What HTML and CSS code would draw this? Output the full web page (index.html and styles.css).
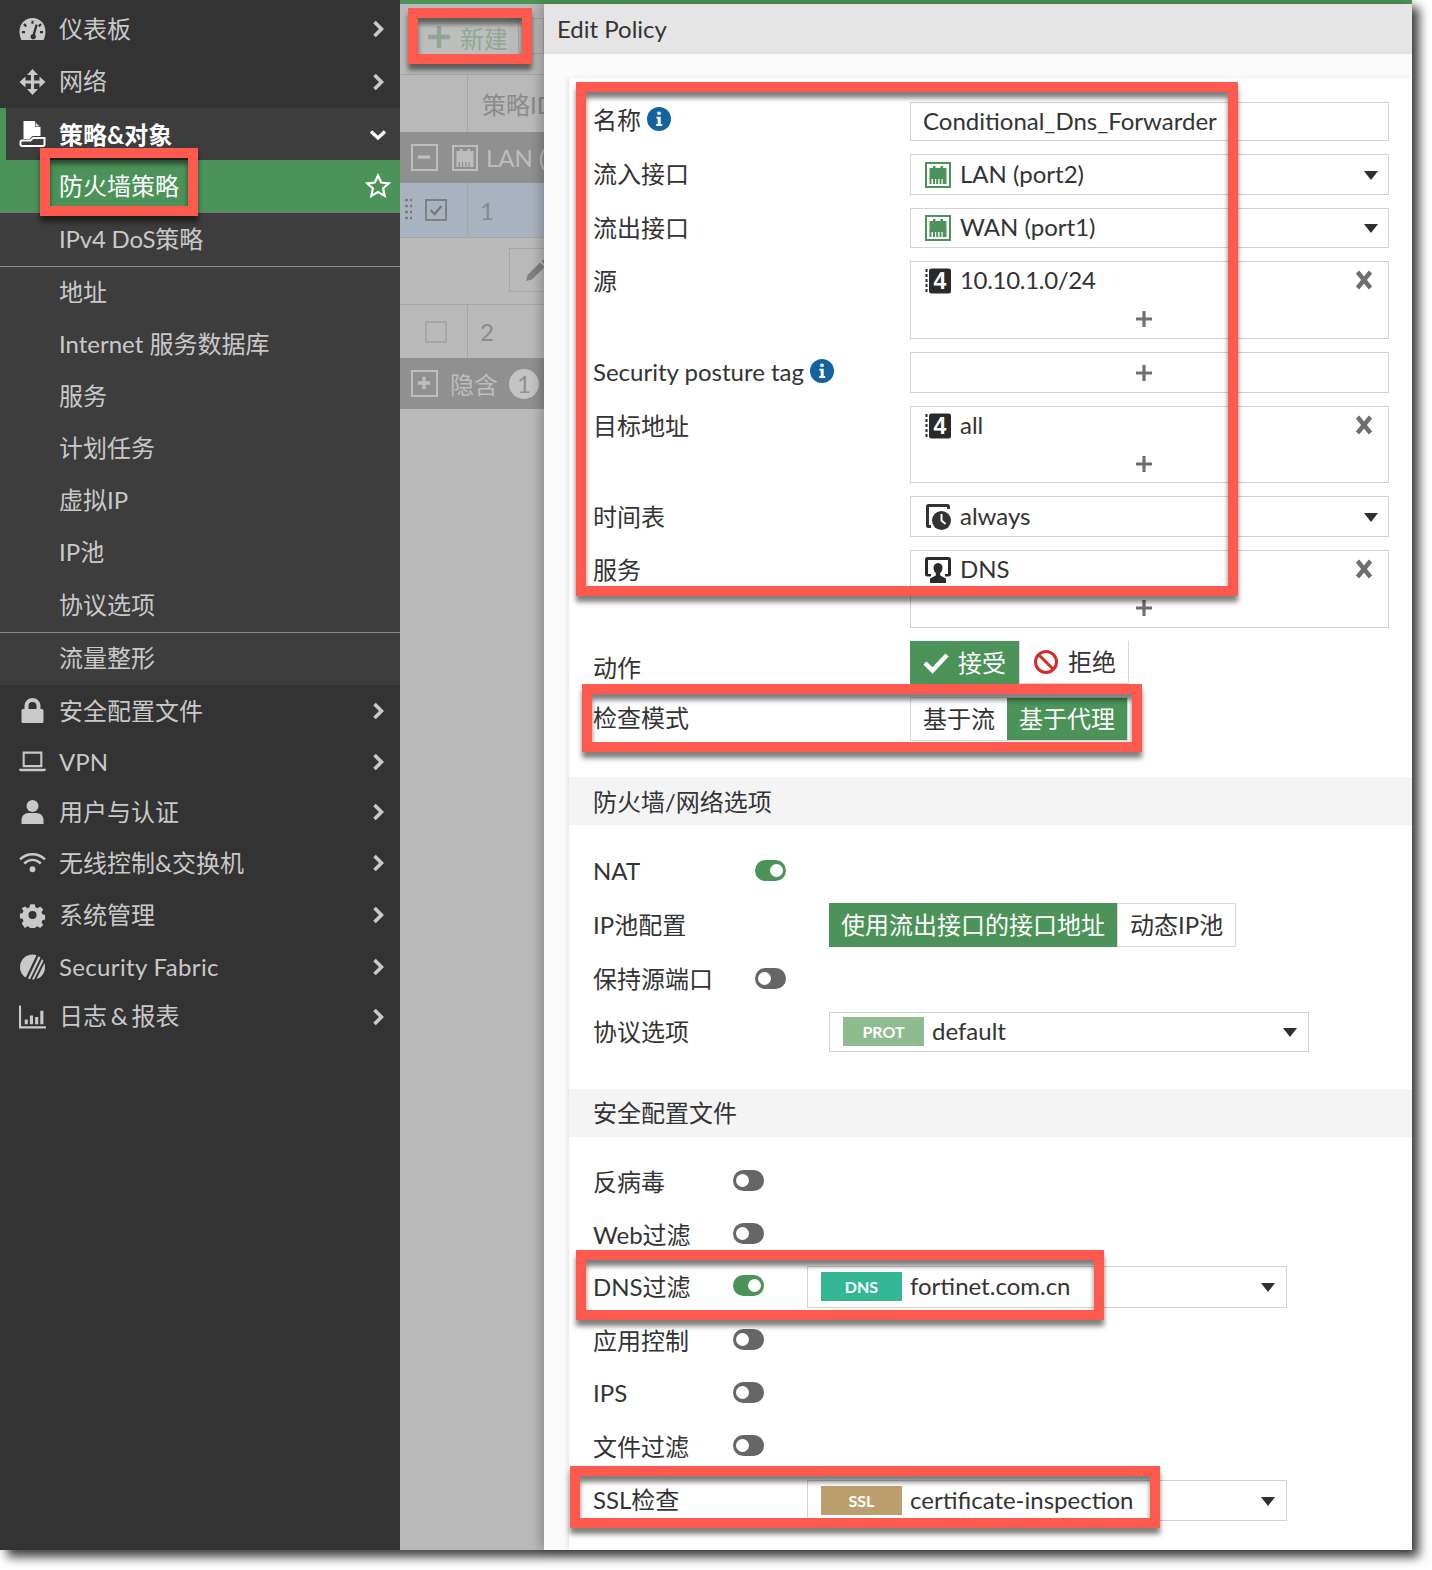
FILE: index.html
```html
<!DOCTYPE html>
<html lang="zh">
<head>
<meta charset="utf-8">
<title>Edit Policy</title>
<link rel="stylesheet" href="styles.css">
</head>
<body>
<svg class="defs" width="0" height="0">
  <defs>
    <symbol id="chev" viewBox="0 0 12 18"><path d="M2.500 2 9.500 9l-7 7" fill="none" stroke="currentColor" stroke-width="3.600"/></symbol>
    <symbol id="port" viewBox="0 0 26 26"><rect x="1" y="1" width="24" height="24" fill="var(--pb,#fff)" stroke="currentColor" stroke-width="2"/><path d="M4.500 6h3.500v-2h2.500v2h5v-2h2.500v2h3.500v11h-17z" fill="currentColor"/><path d="M4.500 16h2v6h-2zM8 16h2v6h-2zM11.200 16h2v6h-2zM14.500 16h2v6h-2zM17.700 16h2v6h-2zM19.500 16h2v6h-2z" fill="currentColor"/></symbol>
    <symbol id="v4" viewBox="0 0 26 26"><rect x="4" y="0.500" width="22" height="25" rx="2.500" fill="#2a2a2a"/><path d="M0.500 1h2v3h-2zM0.500 6h2v3h-2zM0.500 11h2v3h-2zM0.500 16h2v3h-2zM0.500 21h2v3h-2z" fill="#2a2a2a"/><text x="15" y="21" class="v4t">4</text></symbol>
    <symbol id="info" viewBox="0 0 24 24"><circle cx="12" cy="12" r="12" fill="#14629f"/><path d="M9.500 9.800h4.200v7.200h1.500v2h-6v-2h1.500v-5.200h-1.200zM10.300 4.800h3.400v3h-3.400z" fill="#fff"/></symbol>
    <symbol id="xx" viewBox="0 0 18 20"><path d="M2.500 2l13 16M15.500 2l-13 16" stroke="#6f6f6f" stroke-width="4.400" fill="none"/></symbol>
    <symbol id="pl" viewBox="0 0 18 18"><path d="M9 1v16M1 9h16" stroke="#6f6f6f" stroke-width="3.200" fill="none"/></symbol>
  </defs>
</svg>

<div class="window">
  <nav class="sidebar">
    <div class="item first"><svg class="ic" viewBox="0 0 26 22"><path fill-rule="evenodd" d="M13 .5C6 .5.500 6 .500 13.500c0 2.800.5 5.500 1.800 8h21.400c1.300-2.500 1.800-5.200 1.800-8C25.500 6 20 .5 13 .5zM12 3h2v3h-2zM5.500 5.500l2.200 2.200-1.500 1.500L4 7zM20.500 5.500 22 7l-2.200 2.200-1.500-1.500zM2.800 13h3v2h-3zM20.200 13h3v2h-3zM16 6.500l2 .6-2.600 9.300a2.600 2.600 0 1 1-2.200-.6z"/></svg><span class="lab">仪表板</span><svg class="chev"><use href="#chev"/></svg></div>
    <div class="item h53"><svg class="ic" viewBox="0 0 26 26"><path d="M13 0L18.500 6H14.600V11.400H20V7.500L26 13L20 18.500V14.600H14.600V20H18.500L13 26L7.500 20H11.400V14.600H6V18.500L0 13L6 7.500V11.400H11.400V6H7.500Z"/></svg><span class="lab">网络</span><svg class="chev"><use href="#chev"/></svg></div>
    <div class="group">
      <div class="item open"><svg class="ic" viewBox="0 0 26 26"><path class="wht" d="M4 0h11l6 6v9H13l-3 3H4z"/><path d="M15.500 .5 21 6h-5.500z" fill="#3d3d3d"/><path d="M16 1.500 20 5.500h-4z" fill="#ddd"/><path class="outl" d="M2.500 25h21a1.500 1.500 0 0 0 1.500-1.500V17H13.500L11 19.500H2.500A1.500 1.500 0 0 0 1 21v2.500A1.500 1.500 0 0 0 2.500 25z"/></svg><span class="lab">策略&amp;对象</span><svg class="chevd" viewBox="0 0 18 12"><path d="M2 2.500 9 9l7-6.500" fill="none" stroke="#fff" stroke-width="3.400"/></svg></div>
      <div class="sub active"><span class="lab">防火墙策略</span><svg class="star" viewBox="0 0 26 26"><path d="M13 2.500l3.200 7 7.600.8-5.700 5.100 1.600 7.500-6.700-3.800-6.700 3.800 1.600-7.500-5.700-5.100 7.600-.8z" fill="none" stroke="#fff" stroke-width="2.200"/></svg></div>
      <div class="sub line"><span class="lab dos">IPv4 DoS策略</span></div>
      <div class="sub"><span class="lab">地址</span></div>
      <div class="sub"><span class="lab">Internet 服务数据库</span></div>
      <div class="sub"><span class="lab">服务</span></div>
      <div class="sub"><span class="lab">计划任务</span></div>
      <div class="sub"><span class="lab">虚拟IP</span></div>
      <div class="sub"><span class="lab">IP池</span></div>
      <div class="sub line"><span class="lab">协议选项</span></div>
      <div class="sub"><span class="lab">流量整形</span></div>
    </div>
    <div class="item"><svg class="ic" viewBox="0 0 26 26"><path fill-rule="evenodd" d="M5 11V8a8 8 0 0 1 16 0v3h1.500A1.500 1.500 0 0 1 24 12.500v11a1.500 1.500 0 0 1-1.500 1.500h-19A1.500 1.500 0 0 1 2 23.500v-11A1.500 1.500 0 0 1 3.500 11zM9 11h8V8a4 4 0 0 0-8 0z"/></svg><span class="lab">安全配置文件</span><svg class="chev"><use href="#chev"/></svg></div>
    <div class="item h50"><svg class="ic" viewBox="0 0 26 22"><path fill-rule="evenodd" d="M3.500 1h19v15h-19zM5.500 3v11h15V3zM0 17.500h26c0 1.800-1 2.500-2.500 2.500h-21C1 20 0 19.300 0 17.500z"/></svg><span class="lab vpn">VPN</span><svg class="chev"><use href="#chev"/></svg></div>
    <div class="item h50"><svg class="ic" viewBox="0 0 26 26"><circle cx="13" cy="7" r="6"/><path d="M2 25v-4c0-4 3-7 7-7h8c4 0 7 3 7 7v4z"/></svg><span class="lab">用户与认证</span><svg class="chev"><use href="#chev"/></svg></div>
    <div class="item"><svg class="ic" viewBox="0 0 26 20"><path d="M1 6.500C8 0 18 0 25 6.500M5 10.500c5-4.500 11-4.500 16 0" fill="none" stroke="currentColor" stroke-width="2.400"/><circle cx="13" cy="16" r="2.800"/></svg><span class="lab">无线控制&amp;交换机</span><svg class="chev"><use href="#chev"/></svg></div>
    <div class="item"><svg class="ic" viewBox="0 0 26 26"><path fill-rule="evenodd" d="M10.500 1h5l.8 3.500 2.200 1 3-2 3.500 3.500-2 3 1 2.200 3 .8v5l-3 .8-1 2.200 2 3-3.500 3.500-3-2-2.200 1-.8 3h-5l-.8-3-2.200-1-3 2L1 22.500l2-3-1-2.200-3-.8v-5l3-.8 1-2.200-2-3L4.500 3.500l3 2 2.200-1zM13 8.500a4.500 4.500 0 1 0 0 9 4.500 4.500 0 0 0 0-9z" transform="translate(1.300 1.300) scale(.9)"/></svg><span class="lab">系统管理</span><svg class="chev"><use href="#chev"/></svg></div>
    <div class="item"><svg class="ic" viewBox="0 0 26 26"><path d="M13 0.500C6 0.500 .5 6 .5 13c0 4.500 2.300 8.400 5.800 10.600L17 1.200A12.500 12.500 0 0 0 13 .5z"/><path d="M19 2.200 8.500 24.600l2 .7L21 3.500zM22.500 5 12.500 25.500h2L24 6.800zM25 9l-8 16c5-1.300 8.500-6 8.500-12 0-1.400-.2-2.800-.5-4z"/></svg><span class="lab fab">Security Fabric</span><svg class="chev"><use href="#chev"/></svg></div>
    <div class="item h48"><svg class="ic" viewBox="0 0 26 22"><path d="M0 0h2v20h24v2H0zM5.500 13.500h3V18h-3zM10.500 9.500h3V18h-3zM15.500 11h3v7h-3zM20.500 5h3v13h-3z"/></svg><span class="lab logs">日志 &amp; 报表</span><svg class="chev"><use href="#chev"/></svg></div>
  </nav>

  <div class="main">
    <div class="topbar"></div>
    <div class="split">
      <section class="list">
        <div class="toolbar"><div class="newbtn"><svg class="newp" viewBox="0 0 22 22"><path d="M11 0v22M0 11h22" stroke="currentColor" stroke-width="4.500" fill="none"/></svg><span>新建</span></div><div class="next"></div></div>
        <div class="thead"><div class="tc-a"></div><div class="tc-b">策略ID</div></div>
        <div class="grow"><span class="bx"><svg viewBox="0 0 23 23"><path d="M5 11.500h13" stroke="currentColor" stroke-width="3.500"/></svg></span><svg class="lport"><use href="#port"/></svg><span class="gtext">LAN (port2)</span></div>
        <div class="trow sel"><div class="tc-a"><span class="dots"></span><span class="cb on"><svg viewBox="0 0 20 20"><path d="M4 10l4.500 4.500L16 5.500" fill="none" stroke="#777" stroke-width="2.400"/></svg></span></div><div class="tc-b">1</div></div>
        <div class="editrow"><div class="editbtn"><svg viewBox="0 0 26 26"><path d="M3 23l1.500-6L17 4.500l4.500 4.500L9 21.500zM18.500 3l1.500-1.500 4.500 4.500L23 7.500z" fill="#808080"/></svg></div></div>
        <div class="trow two"><div class="tc-a"><span class="cb"></span></div><div class="tc-b">2</div></div>
        <div class="grow hid"><span class="bx"><svg viewBox="0 0 23 23"><path d="M5 11.500h13M11.500 5v13" stroke="currentColor" stroke-width="3.500"/></svg></span><span class="gtext cjk">隐含</span><span class="cnt">1</span></div>
      </section>

      <section class="panel">
        <h2 class="phead">Edit Policy</h2>
        <div class="pbody">
          <form class="form">
            <div class="rows">
              <div class="row h39"><div class="lbl up">名称 <svg class="info"><use href="#info"/></svg></div><div class="fld val"><span>Conditional_Dns_Forwarder</span></div></div>
              <div class="row h41"><div class="lbl">流入接口</div><div class="fld"><svg class="ei grn"><use href="#port"/></svg><span>LAN (port2)</span><i class="car"></i></div></div>
              <div class="row h40"><div class="lbl">流出接口</div><div class="fld"><svg class="ei grn"><use href="#port"/></svg><span>WAN (port1)</span><i class="car"></i></div></div>
              <div class="row h78"><div class="lbl">源</div><div class="fld multi"><div class="mline"><svg class="ei"><use href="#v4"/></svg><span class="num">10.10.1.0/24</span><svg class="xx"><use href="#xx"/></svg></div><div class="pline"><svg class="pl"><use href="#pl"/></svg></div></div></div>
              <div class="row h41"><div class="lbl">Security posture tag <svg class="info"><use href="#info"/></svg></div><div class="fld multi"><div class="pline only"><svg class="pl"><use href="#pl"/></svg></div></div></div>
              <div class="row h77"><div class="lbl">目标地址</div><div class="fld multi"><div class="mline"><svg class="ei"><use href="#v4"/></svg><span>all</span><svg class="xx"><use href="#xx"/></svg></div><div class="pline"><svg class="pl"><use href="#pl"/></svg></div></div></div>
              <div class="row h41"><div class="lbl down">时间表</div><div class="fld"><svg class="ei" viewBox="0 0 26 26"><path d="M3.500 0h19A2.500 2.500 0 0 1 25 2.500V5H22V3H4v18h2v3H3.500A2.500 2.500 0 0 1 1 21.500v-19A2.500 2.500 0 0 1 3.500 0z" fill="#333"/><circle cx="16.500" cy="16.500" r="9.500" fill="#333"/><path d="M16.500 10v6.500l4 3.500" stroke="#fff" stroke-width="2" fill="none"/></svg><span>always</span><i class="car"></i></div></div>
              <div class="row h78"><div class="lbl">服务</div><div class="fld multi"><div class="mline"><svg class="ei" viewBox="0 0 26 26"><path d="M2.500 0h21A2.500 2.500 0 0 1 26 2.500V17a2.500 2.500 0 0 1-2.500 2.500H20V17h3V3H3v14h3v2.500H2.500A2.500 2.500 0 0 1 0 17V2.500A2.500 2.500 0 0 1 2.500 0z" fill="#2a2a2a"/><path d="M13 6c3 0 4.500 2.200 4.500 5 0 2-1 4-2.300 5v2.500L21 21.500V26H5v-4.500l5.800-3V16c-1.300-1-2.300-3-2.300-5 0-2.800 1.500-5 4.500-5z" fill="#2a2a2a"/></svg><span>DNS</span><svg class="xx"><use href="#xx"/></svg></div><div class="pline"><svg class="pl"><use href="#pl"/></svg></div></div></div>
              <div class="row h43"><div class="lbl low">动作</div><div class="seg"><div class="sbtn on act"><svg class="chk" viewBox="0 0 26 22"><path d="M2 11l7.500 7.500L24 3" fill="none" stroke="#fff" stroke-width="4.500"/></svg><span>接受</span></div><div class="sbtn act"><svg class="ban" viewBox="0 0 26 26"><circle cx="13" cy="13" r="10.500" fill="none" stroke="#cf2f2b" stroke-width="3"/><path d="M5.500 5.500l15 15" stroke="#cf2f2b" stroke-width="3"/></svg><span>拒绝</span></div></div></div>
              <div class="row h44"><div class="lbl down">检查模式</div><div class="seg"><div class="sbtn"><span>基于流</span></div><div class="sbtn on"><span>基于代理</span></div></div></div>
            </div>

            <h3 class="sect first">防火墙/网络选项</h3>
            <div class="opts net">
              <div class="orow nudge"><div class="olbl">NAT</div><span class="tg on"></span></div>
              <div class="orow n44"><div class="olbl">IP池配置</div><span class="slot"></span><div class="seg"><div class="sbtn on"><span>使用流出接口的接口地址</span></div><div class="sbtn"><span>动态IP池</span></div></div></div>
              <div class="orow n39"><div class="olbl">保持源端口</div><span class="tg"></span></div>
              <div class="orow n40"><div class="olbl">协议选项</div><span class="slot"></span><div class="fld pick"><span class="bdg prot">PROT</span><span>default</span><i class="car"></i></div></div>
            </div>

            <h3 class="sect">安全配置文件</h3>
            <div class="opts sec">
              <div class="orow n44"><div class="olbl">反病毒</div><span class="tg"></span></div>
              <div class="orow n36"><div class="olbl">Web过滤</div><span class="tg"></span></div>
              <div class="orow n42"><div class="olbl">DNS过滤</div><span class="tg on"></span><div class="fld pick"><span class="bdg dns">DNS</span><span>fortinet.com.cn</span><i class="car"></i></div></div>
              <div class="orow n40"><div class="olbl">应用控制</div><span class="tg"></span></div>
              <div class="orow n40"><div class="olbl">IPS</div><span class="tg"></span></div>
              <div class="orow n40"><div class="olbl">文件过滤</div><span class="tg"></span></div>
              <div class="orow n41"><div class="olbl">SSL检查</div><span class="slot2"></span><div class="fld pick"><span class="bdg ssl">SSL</span><span>certificate-inspection</span><i class="car"></i></div></div>
            </div>
          </form>
        </div>
      </section>
    </div>
  </div>

  <div class="mark m1"></div>
  <div class="mark m2"></div>
  <div class="mark m3"></div>
  <div class="mark m4"></div>
  <div class="mark m5"></div>
  <div class="mark m6"></div>
</div>
</body>
</html>
```

FILE: styles.css
```css
* { box-sizing: border-box; }
html, body { margin: 0; padding: 0; background: #fff; }
body { width: 1432px; height: 1570px; overflow: hidden; font-family: "Lato", "Noto Sans CJK SC", sans-serif; font-size: 24px; color: #333; }
.defs { position: absolute; }
.window { position: relative; width: 1412px; height: 1550px; display: flex; box-shadow: 7px 7px 10px rgba(0,0,0,.75); }

/* sidebar */
.sidebar { width: 400px; flex: none; background: #333; color: #c9c9c9; display: flex; flex-direction: column; }
.item { height: 52px; display: flex; align-items: center; padding-left: 19px; flex: none; position: relative; }
.item.first { height: 55px; padding-top: 3px; }
.item.h53 { height: 53px; }
.item.h50 { height: 50px; }
.item.h48 { height: 48px; }
.ic { width: 27px; height: 26px; fill: currentColor; flex: none; margin-right: 13px; }
.lab { white-space: nowrap; margin-bottom: 4px; }
.lab.vpn { margin-bottom: 2px; }
.lab.fab { letter-spacing: .34px; margin-bottom: 2px; }
.lab.dos { letter-spacing: -.2px; }
.lab.logs { word-spacing: -2.500px; margin-bottom: 6px; }
.chev { position: absolute; left: 372px; top: 50%; margin-top: -9px; width: 12px; height: 18px; }
.item.first .chev { margin-top: -8px; }
.group { background: #3d3d3d; }
.item.open { color: #fff; font-weight: 700; border-left: 6px solid #4b9358; padding-left: 13px; }
.item.open .lab { margin-bottom: 2px; }
.wht { fill: #fff; }
.outl { fill: none; stroke: #fff; stroke-width: 2; }
.chevd { position: absolute; left: 363px; top: 21px; width: 18px; height: 12px; }
.sub { height: 52px; display: flex; align-items: center; padding-left: 59px; position: relative; }
.sub .lab { margin-bottom: 5px; }
.sub.active { background: #4b9358; color: #fff; border-bottom: 1px solid #777; height: 53px; }
.sub.active .lab { margin-bottom: 4px; }
.sub.line { border-bottom: 1px solid #8a8a8a; height: 54px; }
.sub.line:last-of-type { height: 53px; }
.star { position: absolute; left: 365px; top: 13px; width: 26px; height: 26px; }

/* main */
.main { flex: 1; display: flex; flex-direction: column; min-width: 0; }
.topbar { height: 4px; background: #4b9358; flex: none; }
.split { flex: 1; display: flex; min-height: 0; }

/* dimmed list */
.list { width: 144px; flex: none; background: #b9b9b9; color: #8a8a8a; overflow: hidden; position: relative; }
.toolbar { height: 71px; display: flex; align-items: flex-start; padding: 14px 0 0 18px; gap: 9px; border-bottom: 1px solid #a6a6a6; }
.newbtn { width: 104px; height: 36px; background: #bdbdbd; display: flex; align-items: center; padding-left: 10px; gap: 10px; color: #8ea893; }
.newbtn span { margin-top: 2px; }
.newp { width: 22px; height: 22px; margin-top: 1px; }
.next { width: 30px; height: 36px; border: 1px solid #a6a6a6; }
.thead { height: 57px; display: flex; }
.tc-a { width: 68px; flex: none; border-right: 1px solid #a6a6a6; display: flex; align-items: center; padding-left: 25px; position: relative; }
.tc-b { padding-left: 12px; display: flex; align-items: center; white-space: nowrap; }
.thead .tc-b { padding-left: 14px; }
.grow { height: 51px; background: #909090; color: #bdbdbd; display: flex; align-items: center; padding-left: 11px; white-space: nowrap; --pb: #909090; }
.bx { width: 27px; height: 27px; border: 2.500px solid #bdbdbd; display: block; flex: none; }
.bx svg { display: block; width: 22px; height: 22px; }
.lport { width: 26px; height: 26px; margin-left: 14px; margin-right: 8px; color: #bdbdbd; flex: none; }
.gtext.cjk { margin-left: 12px; }
.cnt { width: 30px; height: 30px; border-radius: 50%; background: #c4c4c4; color: #909090; display: flex; align-items: center; justify-content: center; margin-left: 11px; flex: none; }
.trow { height: 55px; display: flex; }
.trow.sel { background: #a9b2bf; border-bottom: 1px solid #a6a6a6; }
.trow.two { height: 54px; border-top: 1px solid #a6a6a6; }
.dots { position: absolute; left: 4px; top: 14px; width: 8px; height: 24px; background-image: radial-gradient(circle, #7d7d7d 1.400px, transparent 1.600px); background-size: 5px 6px; }
.cb { width: 22px; height: 22px; border: 2px solid #a6a6a6; display: block; }
.cb.on { border-color: #808080; }
.cb svg { display: block; width: 18px; height: 18px; }
.editrow { height: 66px; display: flex; padding: 10px 0 0 109px; }
.editbtn { width: 60px; height: 44px; border: 1px solid #a6a6a6; padding: 9px 0 0 13px; flex: none; }
.editbtn svg { width: 26px; height: 26px; display: block; }

/* panel */
.panel { flex: 1; min-width: 0; background: #fafafa; display: flex; flex-direction: column; box-shadow: -4px 0 10px rgba(0,0,0,.22); position: relative; }
.phead { height: 50px; margin: 0; background: #e5e5e5; font-size: 24px; font-weight: 400; color: #333; padding: 7px 0 0 13px; line-height: 36px; flex: none; }
.pbody { flex: 1; padding: 24px 0 0 25px; min-height: 0; overflow: hidden; }
.form { background: #fff; height: 100%; box-shadow: -2px 0 4px rgba(0,0,0,.08); padding-top: 24px; }
.rows { display: flex; flex-direction: column; gap: 13px; padding-left: 24px; }
.row { display: flex; align-items: flex-start; }
.h39 { height: 39px; } .h40 { height: 40px; } .h41 { height: 41px; } .h43 { height: 43px; } .h44 { height: 44px; } .h77 { height: 77px; } .h78 { height: 78px; }
.lbl { width: 317px; flex: none; line-height: 40px; height: 40px; color: #333; display: flex; align-items: center; white-space: pre; }
.lbl.up { line-height: 36px; height: 36px; }
.lbl.down { margin-top: 1px; }
.lbl.low { margin-top: 7px; }
.info { width: 24px; height: 24px; margin-top: -2px; }
.fld { width: 479px; height: 100%; border: 1px solid #d2d2d2; background: #fff; display: flex; align-items: center; padding-left: 14px; position: relative; white-space: nowrap; flex: none; }
.fld > span, .mline > span { margin-bottom: 3px; }
.fld.val { padding-left: 12px; }
.fld.multi { display: block; padding: 0; }
.ei { width: 26px; height: 26px; flex: none; margin-right: 9px; }
.grn { color: #4b9358; }
.v4t { font: 700 23px "Liberation Sans", sans-serif; fill: #fff; text-anchor: middle; }
.num { letter-spacing: -.3px; }
.mline { height: 37px; display: flex; align-items: center; padding: 0 0 0 14px; position: relative; }
.pline { height: 39px; display: flex; align-items: center; justify-content: center; padding-right: 11px; }
.pl { width: 18px; height: 18px; }
.xx { position: absolute; left: 444px; top: 8px; width: 18px; height: 20px; }
.car { position: absolute; right: 10px; top: 50%; margin-top: -4px; width: 0; height: 0; border-left: 7.500px solid transparent; border-right: 7.500px solid transparent; border-top: 9px solid #2f2f2f; }
.seg { display: flex; height: 100%; border: 1px solid #d8d8d8; border-left: 0; flex: none; }
.sbtn { display: flex; align-items: center; padding: 0 12px; white-space: nowrap; background: #fff; color: #333; border-left: 1px solid #d8d8d8; }
.sbtn span { margin-bottom: 3px; }
.sbtn.on { background: #4b9358; color: #fff; border-left: 0; }
.sbtn.act { width: 109px; padding: 0 0 0 13px; margin-top: -1px; }
.chk { width: 26px; height: 22px; margin-right: 9px; }
.ban { width: 26px; height: 26px; margin-right: 9px; }
.seg .sbtn:first-child.on { margin: -1px 0 -1px 0; }

.sect { margin: 36px 0 0; height: 48px; background: #f4f4f4; font-size: 24px; font-weight: 400; padding-left: 24px; line-height: 48px; color: #333; }
.sect.first { line-height: 50px; }
.sect:not(.first) { margin-top: 37px; }
.opts { display: flex; flex-direction: column; gap: 13px; padding-left: 24px; }
.opts.net { padding-top: 25px; }
.opts.sec { padding-top: 23px; }
.orow { display: flex; align-items: center; }
.nudge { height: 44px; margin-bottom: -4px; }
.n36 { height: 36px; } .n39 { height: 39px; } .n40 { height: 40px; } .n41 { height: 41px; } .n42 { height: 42px; } .n44 { height: 44px; }
.olbl { flex: none; white-space: nowrap; margin-bottom: 4px; }
.net .olbl { width: 162px; }
.sec .olbl { width: 140px; }
.tg { width: 31px; height: 21px; border-radius: 11px; background: #666; position: relative; flex: none; margin-top: -3px; }
.tg::after { content: ""; position: absolute; left: 3px; top: 4px; width: 13px; height: 13px; border-radius: 50%; background: #fff; }
.tg.on { background: #4b9358; }
.tg.on::after { left: 15px; }
.slot, .slot2 { width: 74px; flex: none; }
.fld.pick { width: 480px; margin-left: 43px; padding-left: 13px; }
.fld.pick .car { right: 11px; }
.net .fld.pick, .slot2 + .fld.pick { margin-left: 0; }
.bdg { width: 81px; height: 29px; display: flex; align-items: center; justify-content: center; color: #fff; font-size: 16px; font-weight: 700; margin-right: 8px; flex: none; }
.fld > .bdg { margin-bottom: 1px; }
.prot { background: #8fbc8f; }
.dns { background: #33b795; }
.ssl { background: #bd9f6f; }

/* annotation frames laid over the screenshot */
.mark { position: absolute; border: 10px solid #ff5a4d; box-shadow: 0 6px 5px rgba(0,0,0,.5), inset 0 6px 5px rgba(0,0,0,.5); pointer-events: none; }
.m1 { left: 408px; top: 8px; width: 124px; height: 56px; }
.m2 { left: 40px; top: 148px; width: 158px; height: 68px; }
.m3 { left: 576px; top: 82px; width: 662px; height: 514px; }
.m4 { left: 582px; top: 684px; width: 560px; height: 68px; }
.m5 { left: 576px; top: 1250px; width: 528px; height: 70px; }
.m6 { left: 570px; top: 1466px; width: 590px; height: 62px; }
```
